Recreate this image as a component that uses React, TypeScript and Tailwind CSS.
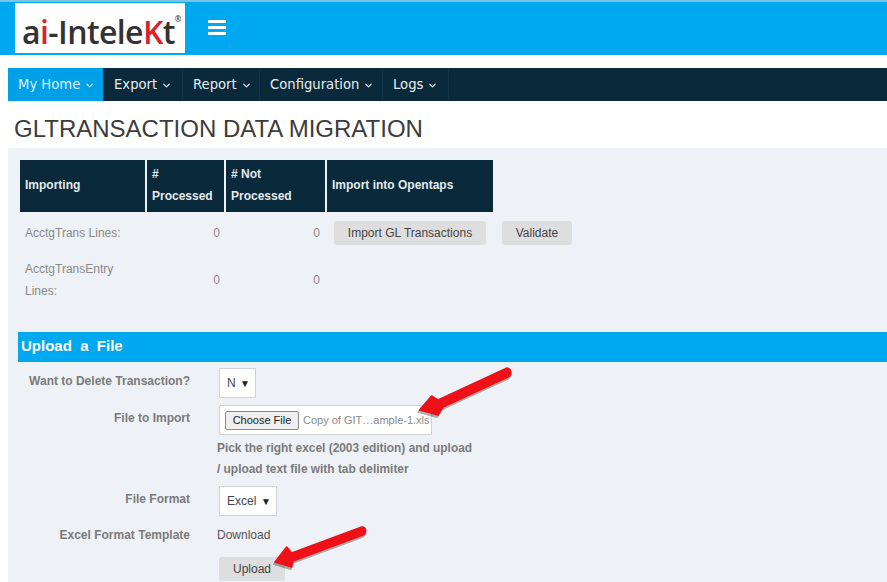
import React from "react"
import { ChevronDown } from "lucide-react"

const navItems = [
  { label: "My Home", width: "w-[96px]", active: true },
  { label: "Export", width: "w-[79px]" },
  { label: "Report", width: "w-[77px]" },
  { label: "Configuration", width: "w-[123px]" },
  { label: "Logs", width: "w-[66px]" },
]

function Arrow({ className, d }: { className: string; d: string }) {
  return (
    <svg viewBox="0 0 110 65" className={className}>
      <path d={d} fill="#000" opacity="0.3" transform="translate(-1 2)" stroke="#000" strokeWidth="2" strokeLinejoin="round" />
      <path d={d} fill="#ee1118" stroke="#ee1118" strokeWidth="1.5" strokeLinejoin="round" />
    </svg>
  )
}

function FakeSelect({ value, width }: { value: string; width: string }) {
  return (
    <div className={`${width} h-[30px] bg-white border border-[#d0d3d6] flex items-center justify-between pl-[7px] pr-[5px] text-[12px] text-[#444]`}>
      <span>{value}</span>
      <span className="text-[10px] text-[#222]">▼</span>
    </div>
  )
}

function FormRow({ label, children, className }: { label: string; children: React.ReactNode; className?: string }) {
  return (
    <div className={`grid grid-cols-[172px_1fr] gap-x-[29px] ${className ?? ""}`}>
      <div className="pt-[4px] text-right text-[12px] font-bold text-[#7b7b7b]">{label}</div>
      <div>{children}</div>
    </div>
  )
}

export default function App() {
  return (
    <div className="relative w-[887px] h-[582px] overflow-hidden bg-white font-['Liberation_Sans',sans-serif]">
      <header className="h-[55px] bg-[#00a8f0] border-t-2 border-[#7cc4e4] flex items-start pl-[15px]">
        <div className="w-[170px] h-[50px] mt-[1px] bg-white flex items-center pl-[7px] pt-[7px]">
          <div className="font-['Open_Sans',sans-serif] text-[32px] leading-none tracking-[-0.6px] font-semibold text-[#333] whitespace-nowrap">
            a<span className="text-[#d8232a]">i</span>-Intele<span className="text-[#d8232a]">K</span>t
            <sup className="text-[8px] align-[18px]">®</sup>
          </div>
        </div>
        <div className="ml-[23px] mt-[18px] w-[18px] flex flex-col gap-[3px]">
          <div className="h-[3px] bg-white rounded-[1px]" />
          <div className="h-[3px] bg-white rounded-[1px]" />
          <div className="h-[3px] bg-white rounded-[1px]" />
        </div>
      </header>

      <nav className="mt-[13px] ml-[8px] h-[33px] bg-[#0a2a3b] flex">
        {navItems.map((item) => (
          <div
            key={item.label}
            className={`${item.width} flex items-center gap-[4px] pl-[10px] pt-[1px] border-r border-[#123345] font-['DejaVu_Sans',sans-serif] text-[13.2px] ${item.active ? "bg-[#00a0e8] text-[#d8f2ff]" : "text-[#e6edf0]"}`}
          >
            {item.label}
            <ChevronDown size={11} strokeWidth={2.5} />
          </div>
        ))}
      </nav>

      <h1 className="ml-[14px] mt-[14px] h-[33px] text-[24px] leading-[28px] text-[#3c3c3c]">GLTRANSACTION DATA MIGRATION</h1>

      <main className="ml-[8px] h-[434px] bg-[#eef1f5] pt-[12px]">
        <div className="ml-[12px] grid grid-cols-[125px_77px_99px_166px] gap-x-[2px] h-[52px] text-[12px] font-bold text-[#e4e9ec] leading-[22px]">
          <div className="bg-[#0a2a3b] flex items-center pl-[5px] pb-[2px]">Importing</div>
          <div className="bg-[#0a2a3b] flex items-center pl-[5px] pb-[2px]"><span>#<br />Processed</span></div>
          <div className="bg-[#0a2a3b] flex items-center pl-[5px] pb-[2px]"><span># Not<br />Processed</span></div>
          <div className="bg-[#0a2a3b] flex items-center pl-[5px] pb-[2px]">Import into Opentaps</div>
        </div>

        <div className="ml-[17px] mt-[9px] h-[24px] flex items-center text-[12px] text-[#8a8a8a]">
          <div className="w-[130px]">AcctgTrans Lines:</div>
          <div className="w-[65px] text-right">0</div>
          <div className="w-[100px] text-right">0</div>
          <button className="ml-[14px] w-[152px] h-[24px] rounded-[3px] bg-[#dedede] text-[#444]">Import GL Transactions</button>
          <button className="ml-[16px] w-[70px] h-[24px] rounded-[3px] bg-[#dedede] text-[#444]">Validate</button>
        </div>

        <div className="ml-[17px] mt-[13px] flex items-center text-[12px] leading-[22px] text-[#8a8a8a]">
          <div className="w-[130px]">AcctgTransEntry<br />Lines:</div>
          <div className="w-[65px] text-right">0</div>
          <div className="w-[100px] text-right">0</div>
        </div>

        <div className="ml-[10px] mt-[30px] h-[30px] bg-[#00a8f0] pl-[3px] pb-[1px] flex items-center text-[15px] font-bold text-white whitespace-pre">Upload  a  File</div>

        <div className="ml-[10px] pt-[6px]">
          <FormRow label="Want to Delete Transaction?">
            <FakeSelect value="N" width="w-[37px]" />
          </FormRow>
          <FormRow label="File to Import" className="mt-[7px]">
            <div className="w-[213px] h-[30px] bg-white border border-[#d0d3d6] flex items-center pl-[5px] text-[11px]">
              <button className="w-[74px] h-[19px] shrink-0 bg-[#efefef] border border-[#8a8a8a] rounded-[2px] text-[#222] text-[11px]">Choose File</button>
              <span className="ml-[4px] text-[#8a8a8a] whitespace-nowrap">Copy of GIT…ample-1.xls</span>
            </div>
            <div className="-ml-[2px] mt-[3px] text-[11.9px] leading-[21px] font-bold text-[#7b7b7b]">
              Pick the right excel (2003 edition) and upload<br />/ upload text file with tab delimiter
            </div>
          </FormRow>
          <FormRow label="File Format" className="mt-[6px]">
            <FakeSelect value="Excel" width="w-[58px]" />
          </FormRow>
          <FormRow label="Excel Format Template" className="mt-[6px]">
            <div className="-ml-[2px] pt-[4px] text-[12px] text-[#555]">Download</div>
          </FormRow>
          <FormRow label="" className="mt-[12px]">
            <button className="w-[66px] h-[24px] rounded-[3px] bg-[#dedede] text-[12px] text-[#444]">Upload</button>
          </FormRow>
        </div>
      </main>

      <Arrow
        className="absolute left-[410px] top-[360px] w-[110px] h-[65px]"
        d="M9.5 50 L21.6 36 L28 40 L97 8 Q101 9 101 13 Q101 16 98 17 L33 47 L28 55 Z"
      />
      <Arrow
        className="absolute left-[265px] top-[520px] w-[110px] h-[65px]"
        d="M10 42 L21.7 27 L26.7 33 L96.7 7 Q100.7 7 100.7 11 Q100.7 14 98 15 L28 41 L26.7 47 Z"
      />
    </div>
  )
}
